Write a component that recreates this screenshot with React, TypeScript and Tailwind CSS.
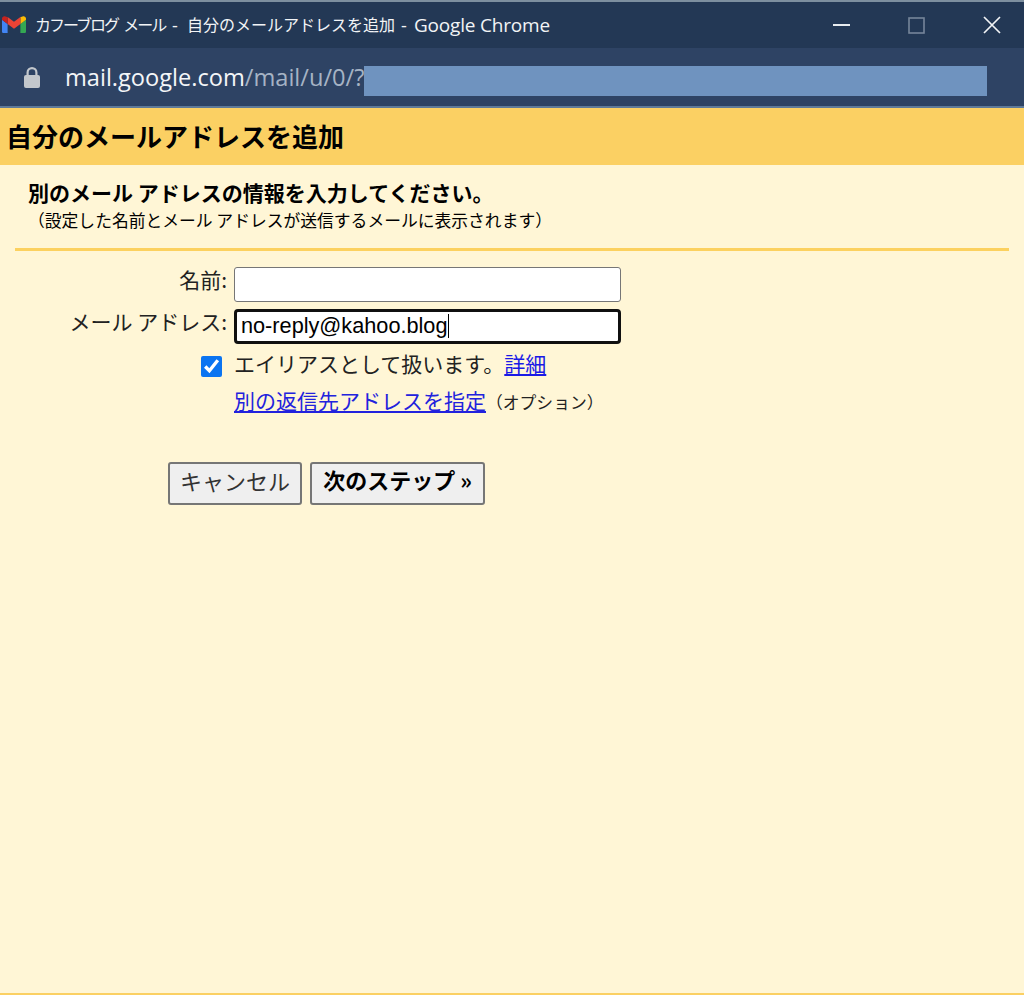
import React from "react";

const JP = "font-['Noto_Sans_CJK_JP','Liberation_Sans',sans-serif]";

function GmailIcon() {
  return (
    <svg width="24" height="18" viewBox="0 0 24 18" className="shrink-0">
      <path d="M1.6 17H5.6V8L0 3.8V15.4C0 16.3 .7 17 1.6 17Z" fill="#4285F4" />
      <path d="M18.4 17H22.4C23.3 17 24 16.3 24 15.4V3.8L18.4 8Z" fill="#34A853" />
      <path d="M18.4 1V8L24 3.8V2.6C24 .6 21.7-.5 20.1.7Z" fill="#FBBC04" />
      <path d="M5.6 8V1L12 5.8 18.4 1V8L12 12.8Z" fill="#EA4335" />
      <path d="M0 2.6V3.8L5.6 8V1L3.9.7C2.3-.5 0 .6 0 2.6Z" fill="#C5221F" />
    </svg>
  );
}

export default function App() {
  return (
    <div className={`flex h-[995px] w-[1024px] flex-col overflow-hidden bg-[#fff6d6] text-black ${JP}`}>
      {/* Title bar */}
      <div className="flex h-[48px] shrink-0 items-center border-t-2 border-[#7d8f9f] bg-[#233855] pl-[2px]">
        <GmailIcon />
        <div className="ml-[9px] flex flex-1 items-center whitespace-nowrap font-['Open_Sans','Noto_Sans_CJK_JP',sans-serif] leading-[24px] text-[#f2f4f6]">
          <span className="w-[132px] text-[16px] tracking-[-2px] [word-spacing:3px]">カフーブログ メール</span>
          <span className="w-[20px] pl-[5px] text-[18px]">-</span>
          <span className="w-[208px] text-[16px]">自分のメールアドレスを追加</span>
          <span className="w-[19px] pl-[6px] text-[18px]">-</span>
          <span className="text-[19px] tracking-[-0.2px]">Google Chrome</span>
        </div>
        <div className="flex items-center pr-[23px]">
          <svg width="18" height="4" viewBox="0 0 18 4" className="mr-[57px]"><rect y="1" width="17" height="2" fill="#e8ecf0" /></svg>
          <svg width="17" height="17" viewBox="0 0 17 17" className="mr-[58px]"><rect x="1" y="1" width="15" height="15" fill="none" stroke="#76859a" strokeWidth="1.6" /></svg>
          <svg width="18" height="18" viewBox="0 0 18 18"><path d="M1 1 17 17M17 1 1 17" stroke="#f2f4f6" strokeWidth="1.7" fill="none" /></svg>
        </div>
      </div>

      {/* Address bar */}
      <div className="flex h-[60px] shrink-0 items-center border-b-2 border-[#5f7a99] bg-[#2e4364] pl-[23px]">
        <svg width="18" height="23" viewBox="0 0 18 23" className="shrink-0">
          <path d="M4.6 10V6.5a4.4 4.4 0 0 1 8.8 0V10" fill="none" stroke="#c3c7cc" strokeWidth="2.2" />
          <rect x="1" y="9" width="16" height="13" rx="2" fill="#c3c7cc" />
        </svg>
        <div className="ml-[24px] flex w-[299px] shrink-0 items-center whitespace-nowrap font-['Open_Sans',sans-serif] text-[23.6px] leading-[30px]">
          <span className="text-[#f4f6f8]">mail.google.com</span>
          <span className="text-[#a6b3c4]">/mail/u/0/?</span>
        </div>
        <div className="mt-[8px] h-[30px] w-[623px] shrink-0 bg-[#6f93bf]" />
      </div>

      {/* Heading */}
      <div className="flex h-[57px] shrink-0 items-center bg-[#fbd063] pb-[2px] pl-[6px]">
        <h1 className="text-[26px] font-bold leading-[32px]">自分のメールアドレスを追加</h1>
      </div>

      {/* Body */}
      <div className="flex flex-1 flex-col border-b-2 border-[#fbd063]">
        <div className="mx-[15px] h-[86px] border-b-[3px] border-[#fcd15f] pl-[13px] pt-[14px]">
          <div className="whitespace-nowrap text-[21px] font-bold leading-[27px]">別のメール アドレスの情報を入力してください。</div>
          <div className="mt-[3px] whitespace-nowrap text-[16.8px] leading-[22px]">（設定した名前とメール アドレスが送信するメールに表示されます）</div>
        </div>

        <div className="mt-[16px] grid grid-cols-[227px_387px] gap-x-[7px]">
          <label className="flex h-[35px] items-center justify-end pb-[11px] text-[21px] leading-[26px] text-[#222]">名前:</label>
          <input
            type="text"
            className="h-[35px] rounded-[3px] border-[1.5px] border-[#767676] bg-white px-[6px] font-['Liberation_Sans',sans-serif] text-[20px] outline-none"
          />
          <label className="mt-[7px] flex h-[35px] items-center justify-end pb-[12px] text-[21px] leading-[26px] text-[#222]">メール アドレス:</label>
          <div className="mt-[7px] flex h-[35px] items-center rounded-[4px] border-[3px] border-[#101010] bg-white pb-[2px] pl-[4px] font-['Liberation_Sans',sans-serif] text-[21.7px] leading-[26px]">
            no-reply@kahoo.blog
            <span className="h-[24px] w-[1px] bg-black" />
          </div>
          <div className="mt-[6px] flex h-[32px] items-center justify-end pr-[5px]">
            <input type="checkbox" defaultChecked readOnly className="h-[21px] w-[21px] accent-[#0b74f1]" />
          </div>
          <div className="mt-[6px] flex h-[32px] items-center whitespace-nowrap pb-[6px] text-[21px] leading-[28px] text-[#222]">
            エイリアスとして扱います。<a href="#" className="text-[#1a1ae6] underline">詳細</a>
          </div>
          <div />
          <div className="mt-[5px] flex h-[32px] items-center whitespace-nowrap pb-[7px]">
            <a href="#" className="text-[21px] leading-[28px] text-[#2222dd] underline">別の返信先アドレスを指定</a>
            <span className="mt-[4px] text-[16.8px] leading-[24px] text-[#222]">（オプション）</span>
          </div>
        </div>

        <div className="ml-[168px] mt-[43px] flex gap-[8px]">
          <button className="h-[43px] w-[134px] rounded-[3px] border-2 border-[#767676] bg-[#efefef] pb-[8px] text-[22px] leading-[30px] text-[#333]">キャンセル</button>
          <button className="h-[43px] w-[175px] rounded-[3px] border-2 border-[#767676] bg-[#efefef] pb-[9px] text-[22px] font-bold leading-[30px]">次のステップ »</button>
        </div>
      </div>
    </div>
  );
}
